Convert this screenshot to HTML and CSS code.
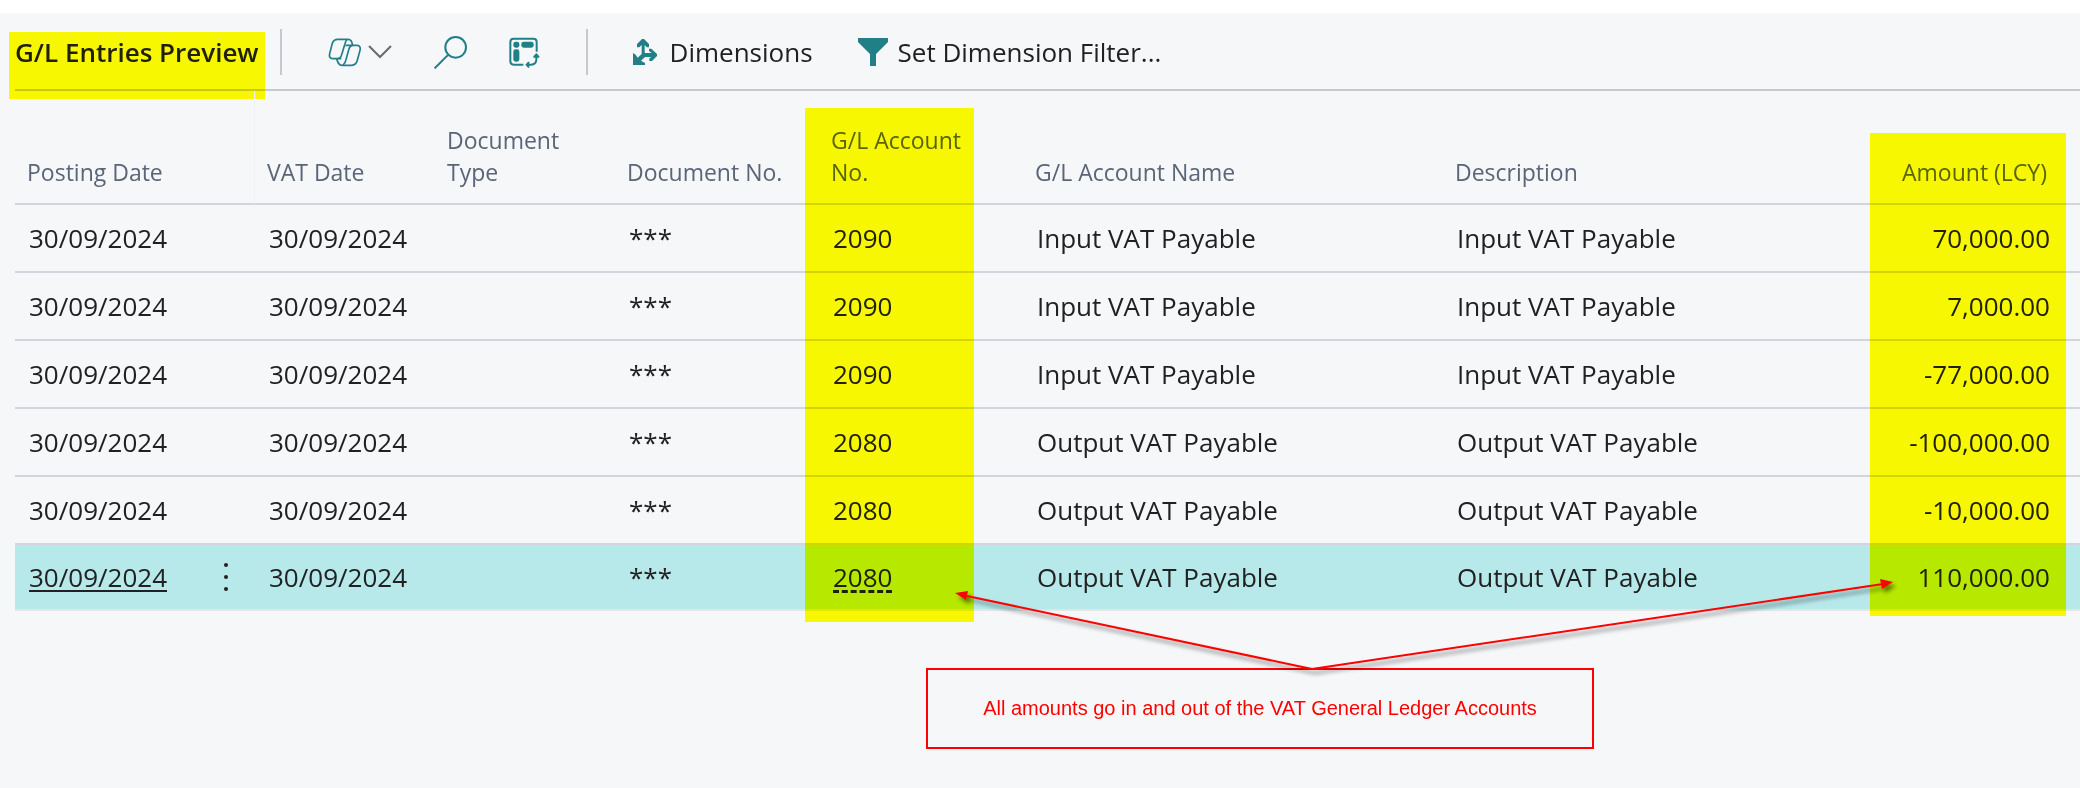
FILE: index.html
```html
<!DOCTYPE html>
<html lang="en">
  <head>
    <meta charset="UTF-8" />
    <meta name="viewport" content="width=device-width, initial-scale=1.0" />
    <title>G/L Entries Preview</title>
    <link rel="stylesheet" href="styles.css">
  </head>
  <body>
    <main class="page">
      <header class="toolbar">
        <h1 class="title">G/L Entries Preview</h1>
        <div class="icons">
          <button class="tool copilot" aria-label="Copilot">
            <svg width="34" height="30" viewBox="52 47 102 90" fill="none" stroke="#217f88" stroke-width="5">
              <path d="M92 112H66C57 112 55 105 57 97L65 66C68 57 73 54 81 54H112C121 54 123 60 126 72" />
              <path d="M109 55C105 58 104 62 102 70L93 100C91 108 88 112 80 112" />
              <path d="M104 72H139C148 72 150 79 148 87L140 117C137 128 132 132 123 132H94C84 132 82 124 78 113" />
              <path d="M96 131C102 129 103 124 105 118L114 86C116 77 119 73 125 72" />
            </svg>
            <svg width="24" height="14" viewBox="0 0 24 14" fill="none" stroke="#6b6b6b" stroke-width="2">
              <path d="M1 1l11 11 11-11" />
            </svg>
          </button>
          <button class="tool" aria-label="Search">
            <svg width="33" height="33" viewBox="40 46 99 99" fill="none" stroke="#217f88" stroke-width="6">
              <circle cx="105" cy="80" r="31" />
              <path d="M83 102L42 143" />
            </svg>
          </button>
          <button class="tool" aria-label="Personalize">
            <svg width="31" height="31" viewBox="269 49 93 93" fill="none" stroke="#217f88" stroke-width="6">
              <path d="M312 132H283Q273 132 273 122V64Q273 54 283 54H342Q352 54 352 64V93" />
              <path d="M351 105V116Q351 132 335 132H326" />
              <g fill="#217f88" stroke="none">
                <rect x="282" y="63" width="18" height="18" rx="7" />
                <rect x="306" y="63" width="37" height="18" rx="7" />
                <rect x="282" y="86" width="18" height="37" rx="7" />
                <path d="M351 97L360 107V111H342V107ZM318 132L326 123H330V141H326Z" />
              </g>
            </svg>
          </button>
        </div>
        <div class="actions">
          <button class="tool">
            <svg width="24" height="26" viewBox="42 51 72 78" fill="#217f88">
              <path d="M69 51H75L90 66V76H83L77 69V93H98L90 87V80H97L114 96V102L99 117H91V109L97 105H78L66 116L78 123V129H42V93L50 98L56 107L68 96V69L61 76H54V66Z" />
            </svg>
            Dimensions
          </button>
          <button class="tool filter">
            <svg width="30" height="28" viewBox="0 0 30 28" fill="#217f88">
              <path d="M0 0H30V4L18 16V28H12V16L0 4Z" />
            </svg>
            Set Dimension Filter...
          </button>
        </div>
      </header>

      <section class="entries">
        <table class="grid">
          <colgroup>
            <col class="col-posting" />
            <col class="col-menu" />
            <col class="col-vat" />
            <col class="col-type" />
            <col class="col-docno" />
            <col class="col-account" />
            <col class="col-name" />
            <col class="col-desc" />
            <col />
          </colgroup>
          <thead>
            <tr>
              <th>Posting Date</th>
              <th class="menu"></th>
              <th>VAT Date</th>
              <th>Document Type</th>
              <th>Document No.</th>
              <th>G/L Account No.</th>
              <th>G/L Account Name</th>
              <th>Description</th>
              <th class="amount">Amount (LCY)</th>
            </tr>
          </thead>
          <tbody>
            <tr>
              <td>30/09/2024</td>
              <td class="menu"></td>
              <td>30/09/2024</td>
              <td></td>
              <td>***</td>
              <td>2090</td>
              <td>Input VAT Payable</td>
              <td>Input VAT Payable</td>
              <td class="amount">70,000.00</td>
            </tr>
            <tr>
              <td>30/09/2024</td>
              <td class="menu"></td>
              <td>30/09/2024</td>
              <td></td>
              <td>***</td>
              <td>2090</td>
              <td>Input VAT Payable</td>
              <td>Input VAT Payable</td>
              <td class="amount">7,000.00</td>
            </tr>
            <tr>
              <td>30/09/2024</td>
              <td class="menu"></td>
              <td>30/09/2024</td>
              <td></td>
              <td>***</td>
              <td>2090</td>
              <td>Input VAT Payable</td>
              <td>Input VAT Payable</td>
              <td class="amount">-77,000.00</td>
            </tr>
            <tr>
              <td>30/09/2024</td>
              <td class="menu"></td>
              <td>30/09/2024</td>
              <td></td>
              <td>***</td>
              <td>2080</td>
              <td>Output VAT Payable</td>
              <td>Output VAT Payable</td>
              <td class="amount">-100,000.00</td>
            </tr>
            <tr>
              <td>30/09/2024</td>
              <td class="menu"></td>
              <td>30/09/2024</td>
              <td></td>
              <td>***</td>
              <td>2080</td>
              <td>Output VAT Payable</td>
              <td>Output VAT Payable</td>
              <td class="amount">-10,000.00</td>
            </tr>
            <tr class="selected">
              <td><a class="open" href="#">30/09/2024</a></td>
              <td class="menu">
                <button class="more" aria-label="Show more options">
                  <svg width="4" height="28" viewBox="0 0 4 28" fill="#212121">
                    <circle cx="2" cy="2" r="2" />
                    <circle cx="2" cy="14" r="2" />
                    <circle cx="2" cy="26" r="2" />
                  </svg>
                </button>
              </td>
              <td>30/09/2024</td>
              <td></td>
              <td>***</td>
              <td><a class="lookup" href="#">2080</a></td>
              <td>Output VAT Payable</td>
              <td>Output VAT Payable</td>
              <td class="amount">110,000.00</td>
            </tr>
          </tbody>
        </table>

        <div class="highlight highlight-account"></div>
        <div class="highlight highlight-amount"></div>

        <!-- note with arrows to both highlighted columns -->
        <svg class="arrows" width="960" height="110" viewBox="0 0 960 110">
          <path d="M367 94L22 21M367 94L938 9" fill="none" stroke="#ff0000" stroke-width="2" />
          <path d="M10 18L23 16L21 25ZM948 7L937 14L935 4Z" fill="#ff0000" />
        </svg>
        <p class="note">All amounts go in and out of the VAT General Ledger Accounts</p>
      </section>
    </main>
  </body>
</html>
```

FILE: styles.css
```css
* {
  margin: 0;
  padding: 0;
  box-sizing: border-box;
}
body {
  background-color: #ffffff;
  color: #212121;
  font-family: "Open Sans", "Noto Sans", sans-serif;
  font-size: 26px;
  padding-top: 13px;
}
button {
  background: none;
  border: none;
  color: inherit;
  font: inherit;
}
svg {
  display: block;
  flex: none;
}
.page {
  min-height: calc(100vh - 13px);
  background-color: #f6f7f9;
  padding-left: 15px;
}

/* toolbar */
.toolbar {
  display: flex;
  align-items: center;
  height: 78px;
  padding-top: 2px;
  border-bottom: 2px solid #c8c9cf;
}
.title {
  position: relative;
  font-size: 26px;
  font-weight: 600;
  line-height: 40px;
  white-space: nowrap;
}
.title::after {
  content: "";
  position: absolute;
  inset: 0 -6px -27px -6px;
  background-color: #ffff00;
  mix-blend-mode: multiply;
}
.icons,
.actions {
  display: flex;
  align-items: center;
  height: 46px;
}
.icons {
  gap: 42px;
  margin-left: 21px;
  padding: 0 46px;
  border-left: 2px solid #c8c9cf;
  border-right: 2px solid #c8c9cf;
}
.actions {
  gap: 45px;
  padding-left: 45px;
}
.tool {
  display: flex;
  align-items: center;
  gap: 13px;
  line-height: 40px;
  white-space: nowrap;
}
.copilot {
  gap: 6px;
}
.filter {
  gap: 10px;
}

/* entries */
.entries {
  position: relative;
}
.grid {
  width: 100%;
  table-layout: fixed;
  border-collapse: separate;
  border-spacing: 0;
}
.col-posting { width: 182px; }
.col-menu { width: 58px; }
.col-vat { width: 180px; }
.col-type { width: 180px; }
.col-docno { width: 204px; }
.col-account { width: 204px; }
.col-name { width: 420px; }
.col-desc { width: 421px; }

th {
  height: 114px;
  padding: 0 28px 15px 12px;
  border-bottom: 2px solid #d3d5dc;
  color: #5b6578;
  font-size: 23px;
  font-weight: 400;
  line-height: 32px;
  text-align: left;
  vertical-align: bottom;
}
td {
  height: 68px;
  padding: 0 14px;
  border-bottom: 2px solid #d3d5dc;
  line-height: 40px;
  white-space: nowrap;
}
th.menu {
  border-right: 1px solid #f0f1f3;
}
.menu {
  padding: 0;
}
th.amount {
  padding-right: 33px;
  text-align: right;
}
td.amount {
  padding-right: 30px;
  text-align: right;
}
.selected td {
  height: 66px;
  background-color: #b7e9eb;
  border-bottom-color: #e4e5e7;
}
.open,
.lookup {
  color: inherit;
  text-decoration: underline 2px;
  text-decoration-skip-ink: none;
  text-underline-offset: 3px;
}
.lookup {
  text-decoration: underline dashed 3px;
}
.more {
  display: flex;
  margin: 0 auto;
  padding: 0 8px;
}

/* annotations */
.highlight {
  position: absolute;
  background-color: #ffff00;
  mix-blend-mode: multiply;
}
.highlight-account {
  top: 17px;
  left: 790px;
  width: 169px;
  height: 514px;
}
.highlight-amount {
  top: 42px;
  right: 14px;
  width: 196px;
  height: 483px;
}
.arrows {
  position: absolute;
  top: 484px;
  left: 930px;
  filter: drop-shadow(3px 4px 2px rgba(0, 0, 0, 0.5));
}
.note {
  width: 668px;
  margin: 57px 0 0 911px;
  border: 2px solid #ff0000;
  color: #ff0000;
  font-family: "Liberation Sans", Arial, sans-serif;
  font-size: 20px;
  line-height: 77px;
  text-align: center;
}
```
